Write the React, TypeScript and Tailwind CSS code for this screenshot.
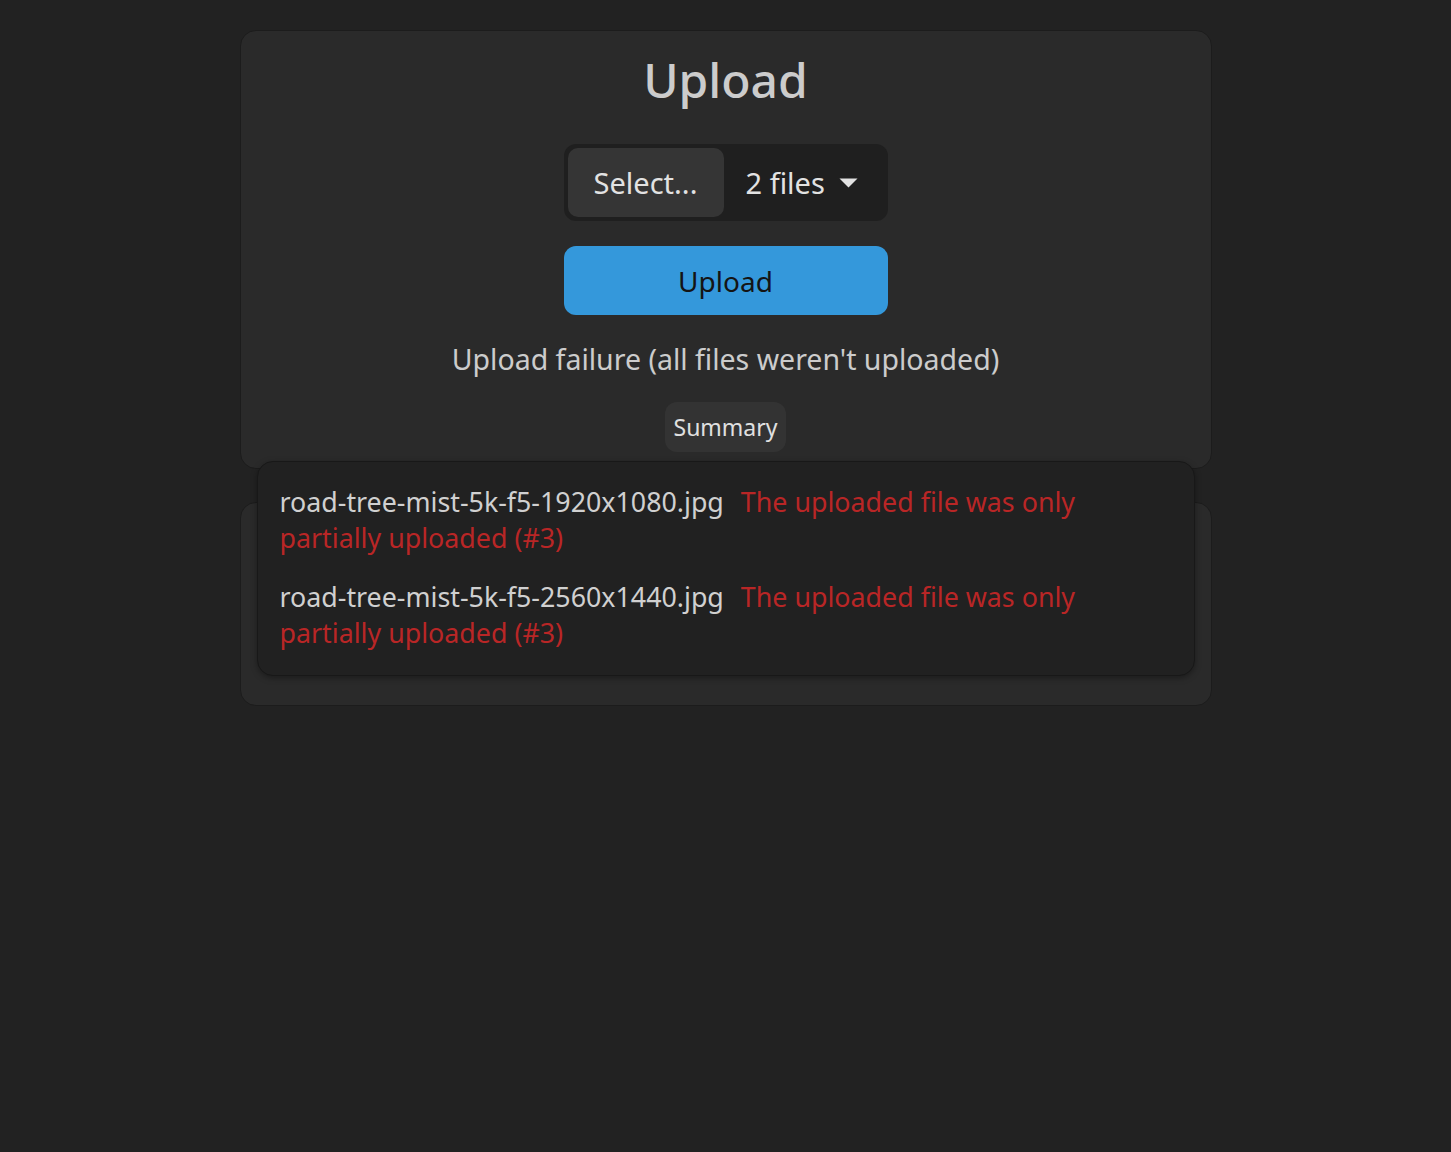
import { useState } from 'react'

const files = [
  { name: 'road-tree-mist-5k-f5-1920x1080.jpg', error: ['The uploaded file was only', 'partially uploaded (#3)'] },
  { name: 'road-tree-mist-5k-f5-2560x1440.jpg', error: ['The uploaded file was only', 'partially uploaded (#3)'] },
]

export default function App() {
  const [showSummary, setShowSummary] = useState(true)

  return (
    <div
      className="min-h-screen bg-[#222222] flex justify-center pt-[30px] text-[#cccccc]"
      style={{ fontFamily: '"Noto Sans", "Open Sans", sans-serif' }}
    >
      <div className="w-[972px] flex flex-col gap-[33px]">
        <div className="relative rounded-[16px] border border-[#1c1c1c] bg-[#2a2a2a] flex flex-col items-center pt-[14px] pb-[16px]">
          <h1 className="h-[70px] flex items-center text-[48px] font-medium text-[#cccccc]">Upload</h1>

          <div className="mt-[29px] w-[324px] h-[77px] rounded-[12px] bg-[#1f1f1f] p-[4px] flex items-center">
            <button className="w-[156px] h-full rounded-[10px] bg-[#353535] text-[29px] text-[#e2e2e2]">
              Select...
            </button>
            <div className="flex-1 flex items-center justify-between pl-[22px] pr-[26px] text-[29px] text-[#e2e2e2]">
              <span>2 files</span>
              <svg width="19" height="10" viewBox="0 0 19 10">
                <path d="M0.5 0.5h18l-9 9z" fill="#e2e2e2" />
              </svg>
            </div>
          </div>

          <button className="mt-[25px] w-[324px] h-[69px] rounded-[12px] bg-[#3498db] text-[28px] text-[#141414]">
            Upload
          </button>

          <p className="mt-[25px] h-[38px] flex items-center text-[28.5px] text-[#cccccc]">
            Upload failure (all files weren't uploaded)
          </p>

          <button
            onClick={() => setShowSummary(!showSummary)}
            className="mt-[24px] h-[50px] px-[9px] rounded-[12px] bg-[#333333] text-[23px] text-[#e0e0e0]"
          >
            Summary
          </button>

          {showSummary && (
            <div className="absolute left-[16px] right-[16px] top-[430px] z-10 rounded-[16px] border border-[#181818] bg-[#212121] shadow-[0_2px_6px_rgba(0,0,0,0.35)] pl-[22px] pr-[40px] pt-[22px] pb-[24px] flex flex-col gap-[23px]">
              {files.map((f) => (
                <div key={f.name} className="text-[26.8px] leading-[36px]">
                  <div className="flex">
                    <span className="text-[#d0d0d0]">{f.name}</span>
                    <span className="ml-[17px] text-[#b92626]">{f.error[0]}</span>
                  </div>
                  <div className="text-[#b92626]">{f.error[1]}</div>
                </div>
              ))}
            </div>
          )}
        </div>

        <div className="h-[204px] rounded-[16px] border border-[#1c1c1c] bg-[#2a2a2a]" />
      </div>
    </div>
  )
}
